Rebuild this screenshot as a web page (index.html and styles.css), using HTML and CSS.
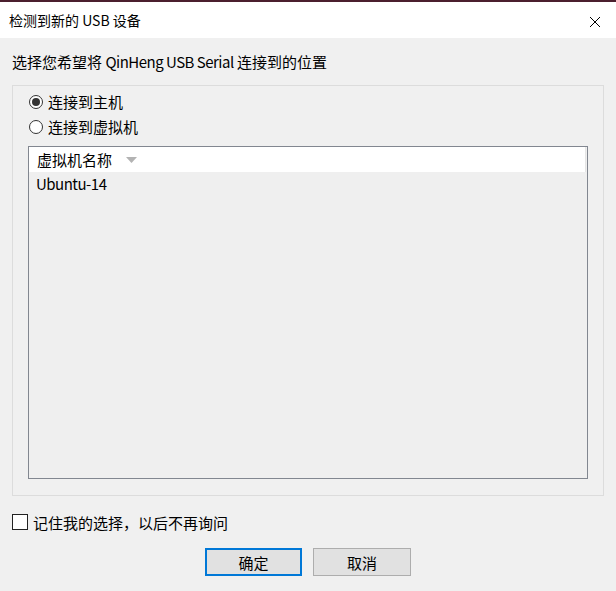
FILE: index.html
```html
<!DOCTYPE html>
<html lang="zh-CN">
<head>
<meta charset="utf-8">
<title>检测到新的 USB 设备</title>
<link rel="stylesheet" href="styles.css">
</head>
<body>
<div class="dialog">
  <div class="titlebar">
    <span class="title">检测到新的 USB 设备</span>
    <svg class="close" width="12" height="12" viewBox="0 0 12 12"><path d="M1 1 L11 11 M11 1 L1 11" stroke="#000" stroke-width="1" fill="none"/></svg>
  </div>
  <div class="content">
    <div class="prompt">选择您希望将 <span class="lat">QinHeng USB Serial</span> 连接到的位置</div>
    <div class="group">
      <label class="radio-row"><span class="radio checked"></span><span>连接到主机</span></label>
      <label class="radio-row"><span class="radio"></span><span>连接到虚拟机</span></label>
      <div class="list">
        <div class="list-header">
          <span>虚拟机名称</span>
          <svg class="sort" width="11" height="6" viewBox="0 0 11 6"><path d="M0 0 L11 0 L5.5 6 Z" fill="#b3b3b3"/></svg>
        </div>
        <div class="list-row"><span class="lat">Ubuntu-14</span></div>
      </div>
    </div>
    <label class="check-row"><span class="checkbox"></span><span>记住我的选择，以后不再询问</span></label>
    <div class="buttons">
      <button class="btn btn-default">确定</button>
      <button class="btn btn-cancel">取消</button>
    </div>
  </div>
</div>
</body>
</html>
```

FILE: styles.css
```css
html, body {
  margin: 0;
  padding: 0;
}
body {
  width: 616px;
  height: 591px;
  background: #f0f0f0;
  font-family: "Noto Sans CJK SC", "Noto Sans", sans-serif;
  font-size: 15px;
  color: #000;
  overflow: hidden;
}
.dialog {
  display: flex;
  flex-direction: column;
  height: 591px;
}
.titlebar {
  box-sizing: border-box;
  height: 38px;
  border-top: 2px solid #4b1f2e;
  background: #fff;
  display: flex;
  align-items: center;
  justify-content: space-between;
  padding: 0 15px 0 9px;
}
.title {
  font-size: 14px;
}
.lat {
  letter-spacing: -0.5px;
}
.close {
  display: block;
  margin-top: 3px;
}
.content {
  padding: 0 12px;
  display: flex;
  flex-direction: column;
}
.prompt {
  margin-top: 13px;
  line-height: 22px;
  height: 22px;
}
.group {
  box-sizing: border-box;
  margin-top: 12px;
  height: 411px;
  border: 1px solid #dcdcdc;
  padding: 3px 15px 16px 15px;
  display: flex;
  flex-direction: column;
}
.radio-row {
  height: 25px;
  display: flex;
  align-items: center;
  gap: 5px;
  padding-left: 1px;
}
.radio {
  box-sizing: border-box;
  width: 14px;
  height: 14px;
  border: 1px solid #333;
  border-radius: 50%;
  background: #fff;
  display: flex;
  align-items: center;
  justify-content: center;
}
.radio.checked::after {
  content: "";
  width: 8px;
  height: 8px;
  border-radius: 50%;
  background: #333;
}
.list {
  box-sizing: border-box;
  margin-top: 7px;
  flex: 1;
  border: 1px solid #828790;
  background: #efefef;
  display: flex;
  flex-direction: column;
}
.list-header {
  height: 25px;
  background: #fff;
  border-right: 1px solid #e5e5e5;
  margin-right: 1px;
  display: flex;
  align-items: center;
  padding-left: 8px;
  gap: 14px;
}
.sort {
  display: block;
  margin-top: 1px;
}
.list-row {
  height: 24px;
  line-height: 24px;
  padding-left: 7px;
}
.check-row {
  margin-top: 15px;
  height: 22px;
  display: flex;
  align-items: center;
  gap: 5px;
}
.checkbox {
  box-sizing: border-box;
  width: 16px;
  height: 16px;
  border: 1px solid #222;
  background: #fff;
}
.buttons {
  margin-top: 15px;
  display: flex;
  justify-content: center;
  gap: 11px;
}
.btn {
  box-sizing: border-box;
  width: 97px;
  height: 28px;
  border: 1px solid #adadad;
  background: #e1e1e1;
  font-family: inherit;
  font-size: 15px;
  color: #000;
  padding: 0;
  margin: 0;
}
.btn-cancel {
  width: 98px;
}
.btn-default {
  border: 2px solid #0078d7;
}
```
